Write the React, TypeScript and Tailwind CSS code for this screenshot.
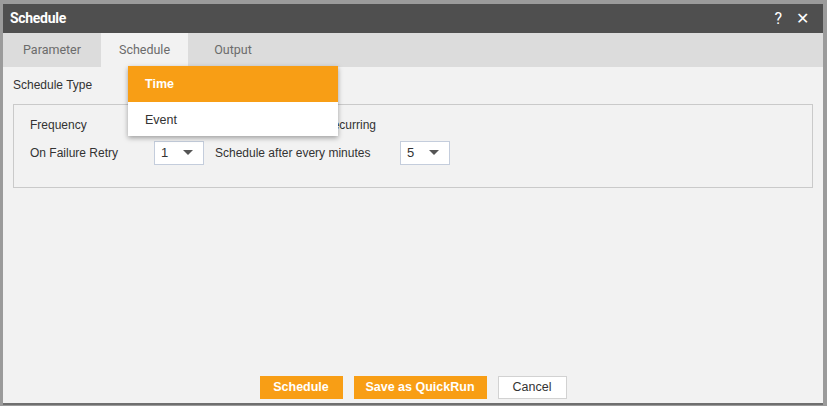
import React from 'react';

const Caret = () => (
  <svg width="10" height="6" viewBox="0 0 10 6" className="fill-[#555]">
    <path d="M0 0 L10 0 L5 5 Z" />
  </svg>
);

const Select = ({ value }: { value: string }) => (
  <div className="flex h-[24px] w-[50px] items-center justify-between border border-[#c4cddc] bg-white pl-[6px] pr-[10px] text-[13px] text-[#333]">
    <span>{value}</span>
    <Caret />
  </div>
);

export default function App() {
  return (
    <div className="h-[406px] w-[827px] bg-[#9b9b9b] pl-[3px] pr-[4px] pt-[4px] font-['Liberation_Sans',Arial,sans-serif]">
      <div className="relative flex h-[401px] flex-col border-b-[2px] border-[#6f6f6f] bg-[#f2f2f2]">
        {/* title bar */}
        <div className="flex h-[29px] items-center justify-between bg-[#4f4f4f] pl-[7px] pr-[14px] text-white">
          <span className="font-['Roboto',sans-serif] text-[14px] font-bold tracking-[-0.3px]">Schedule</span>
          <div className="flex items-center gap-[14px] font-['Roboto',sans-serif] text-[16px]">
            <span>?</span>
            <span>✕</span>
          </div>
        </div>

        {/* tabs */}
        <div className="flex h-[34px] items-stretch bg-[#dcdcdc] font-['Roboto',sans-serif] text-[12.5px] text-[#6b6b6b]">
          <div className="flex w-[98px] items-center justify-center">Parameter</div>
          <div className="flex w-[87px] items-center justify-center bg-[#f2f2f2]">Schedule</div>
          <div className="flex w-[90px] items-center justify-center">Output</div>
        </div>

        {/* body */}
        <div className="flex flex-1 flex-col px-[10px] text-[12px] text-[#333]">
          <div className="h-[37px] pt-[9px]">Schedule Type</div>
          <div className="h-[84px] border border-[#cacaca] px-[16px] pt-[10px]">
            <div className="flex h-[20px] items-center">
              <span className="w-[294px]">Frequency</span>
              <span>Recurring</span>
            </div>
            <div className="mt-[6px] flex items-center">
              <span className="w-[124px]">On Failure Retry</span>
              <Select value="1" />
              <span className="ml-[11px] w-[185px]">Schedule after every minutes</span>
              <Select value="5" />
            </div>
          </div>

          <div className="mt-auto mb-[4px] flex justify-center gap-[11px] text-[12.5px]">
            <button className="h-[23px] w-[83px] bg-[#f89e15] font-bold text-white">Schedule</button>
            <button className="h-[23px] w-[133px] bg-[#f89e15] font-bold text-white">Save as QuickRun</button>
            <button className="h-[23px] w-[69px] border border-[#d2d2d2] bg-white text-[#333]">Cancel</button>
          </div>
        </div>

        {/* open dropdown menu */}
        <div className="absolute left-[125px] top-[62px] w-[210px] bg-white text-[12.5px] shadow-[0_2px_5px_rgba(0,0,0,0.35)]">
          <div className="flex h-[36px] items-center bg-[#f89e15] pl-[17px] font-bold text-white">Time</div>
          <div className="flex h-[34px] items-center pl-[17px] pt-[2px] text-[#333]">Event</div>
        </div>
      </div>
    </div>
  );
}
